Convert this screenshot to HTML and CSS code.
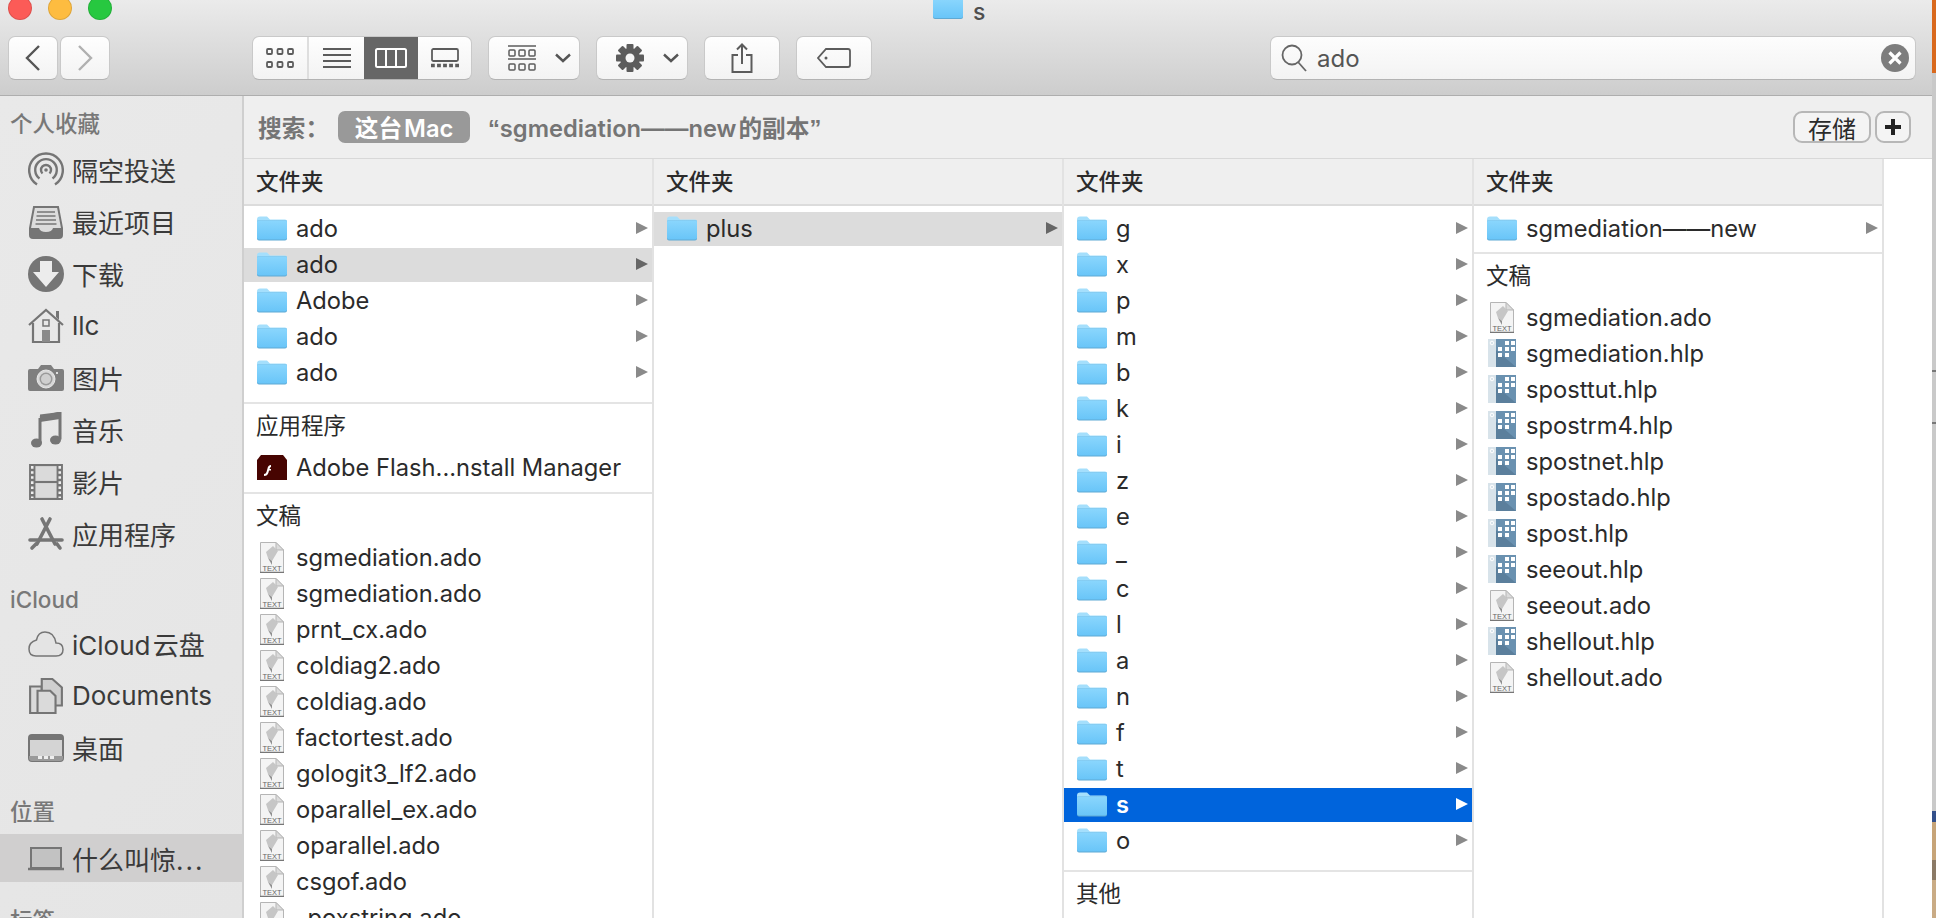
FILE: index.html
```html
<!DOCTYPE html>
<html lang="zh">
<head>
<meta charset="utf-8">
<title>s</title>
<link rel="stylesheet" href="styles.css">
</head>
<body>
<svg class="defs" aria-hidden="true">
  <defs>
    <linearGradient id="fg" x1="0" y1="0" x2="0" y2="1"><stop offset="0" stop-color="#8ad6fd"/><stop offset="1" stop-color="#69c5f8"/></linearGradient>
    <symbol id="folder" viewBox="0 0 30 24">
      <path d="M0 3Q0 0 3 0H10L13 3H28Q30 3 30 5V8H0Z" fill="#a5dffc"/>
      <path d="M0 5Q0 4 1 4H29Q30 4 30 5V22Q30 24 28 24H2Q0 24 0 22Z" fill="#5fa9d3"/>
      <path d="M0 5Q0 4 1 4H29Q30 4 30 5V21Q30 23 28 23H2Q0 23 0 21Z" fill="url(#fg)"/>
    </symbol>
    <symbol id="flash" viewBox="0 0 30 25">
      <path d="M4 0H26L30 5V25H0V5Z" fill="#470401"/>
      <path d="M14 10Q11 10 10.500 13.500L9.500 17Q9 19 7 19V21Q10.500 21 11.500 17.500L12 15.500H14V14H12.500Q13 12 14 12Z" fill="#fff"/>
    </symbol>
    <symbol id="txt" viewBox="0 0 24 31">
      <path d="M.5.5H16L23.500 8V30.500H.5Z" fill="#f4f4f4" stroke="#b5b5b5"/>
      <path d="M16 .5V8H23.500Z" fill="#dcdcdc" stroke="#b5b5b5"/>
      <path d="M6 10L13 4L18 9L12 19L8 16Z" fill="#c6c6c6"/>
      <path d="M8 16L12 23L12 19Z" fill="#8f8f8f"/>
      <path d="M0 30.500H24" stroke="#777" stroke-width="1.500"/>
      <text x="12" y="29" class="txt-label">TEXT</text>
    </symbol>
    <symbol id="hlp" viewBox="0 0 28 28">
      <rect width="8" height="28" fill="#d8e3ea"/>
      <rect x="8" width="20" height="28" fill="#6a91b0"/>
      <path d="M8 11L28 28H8Z" fill="#5b7f9c"/>
      <circle cx="4" cy="4" r="1.800" fill="none" stroke="#fff"/>
      <path d="M17 2h4v4h-4zM23 2h4v4h-4zM17 8h4v4h-4zM23 8h4v4h-4zM10 8h4v4h-4zM10 14h4v4h-4zM17 14h4v4h-4z" fill="#fff"/>
    </symbol>
    <symbol id="airdrop" viewBox="0 0 36 36">
      <g fill="none" stroke="#757575" stroke-width="2.400">
        <path d="M9 32.500A16.800 16.800 0 1 1 27 32.500"/>
        <path d="M11.500 26.500A10.800 10.800 0 1 1 24.500 26.500"/>
        <path d="M14.500 21.500A5 5 0 1 1 21.500 21.500"/>
      </g>
      <circle cx="18" cy="18" r="1.800" fill="#757575"/>
    </symbol>
    <symbol id="recent" viewBox="0 0 36 36">
      <path d="M6 3H30L34 24V31Q34 34 31 34H5Q2 34 2 31V24Z" fill="#dcdcdc" stroke="#757575" stroke-width="2"/>
      <path d="M9 8H27M8.500 12H27.500M8 16H28M7.500 20H28.500" stroke="#757575" stroke-width="1.500"/>
      <path d="M2 24H11Q12 28 18 28T25 24H34V31Q34 34 31 34H5Q2 34 2 31Z" fill="#757575"/>
    </symbol>
    <symbol id="download" viewBox="0 0 36 36">
      <circle cx="18" cy="18" r="18" fill="#757575"/>
      <path d="M12 5H24V16H31L18 31L5 16H12Z" fill="#ececec"/>
    </symbol>
    <symbol id="home" viewBox="0 0 36 36">
      <path d="M1 17L18 2L35 17" fill="none" stroke="#757575" stroke-width="2.200"/>
      <path d="M28 3H31V12L28 9Z" fill="#757575"/>
      <path d="M5 15V34H31V15" fill="none" stroke="#757575" stroke-width="2.200"/>
      <rect x="15" y="12" width="6" height="6" fill="none" stroke="#757575" stroke-width="1.500"/>
      <rect x="14" y="22" width="8" height="12" fill="#8a8a8a"/>
    </symbol>
    <symbol id="camera" viewBox="0 0 36 26">
      <path d="M2 4H10L13 0H23L26 4H34Q36 4 36 6V24Q36 26 34 26H2Q0 26 0 24V6Q0 4 2 4Z" fill="#7e7e7e"/>
      <circle cx="18" cy="14" r="9" fill="#d8d8d8" stroke="#e8e8e8" stroke-width="1"/>
      <circle cx="18" cy="14" r="6.500" fill="#9a9a9a"/>
      <circle cx="18" cy="14" r="5" fill="#cfcfcf"/>
      <circle cx="29" cy="8" r="1" fill="#fff"/>
    </symbol>
    <symbol id="music" viewBox="0 0 30 36">
      <path d="M9 6L29 1V27.500" fill="none" stroke="#757575" stroke-width="3"/>
      <path d="M9 6V31" fill="none" stroke="#757575" stroke-width="3"/>
      <path d="M9 2.500L29 0V7L9 10Z" fill="#757575"/>
      <ellipse cx="5.500" cy="31" rx="5.500" ry="4.500" fill="#757575"/>
      <ellipse cx="24.500" cy="28" rx="5.500" ry="4.500" fill="#757575"/>
    </symbol>
    <symbol id="film" viewBox="0 0 32 34">
      <rect width="32" height="34" fill="#757575"/>
      <rect x="6" y="2" width="20" height="14" fill="#dadada"/>
      <rect x="6" y="18" width="20" height="14" fill="#dadada"/>
      <path d="M3 2V32M29 2V32" stroke="#eee" stroke-width="2.400" stroke-dasharray="2.400 2.400"/>
    </symbol>
    <symbol id="apps" viewBox="0 0 36 34">
      <g fill="none" stroke="#757575" stroke-width="3.600" stroke-linecap="round">
        <path d="M14 2L27 27"/>
        <path d="M22 2L9 27"/>
        <path d="M2 23H34"/>
        <path d="M4 31L8 27"/>
        <path d="M29 27L32 31"/>
      </g>
    </symbol>
    <symbol id="cloud" viewBox="0 0 36 26">
      <path d="M8 25H28Q35 25 35 18.500T28 12Q26 1 17 1Q10 1 8.500 9Q1 11 1 18T8 25Z" fill="#e4e4e4" stroke="#757575" stroke-width="1.500"/>
    </symbol>
    <symbol id="docs" viewBox="0 0 32 34">
      <path d="M1 8H12V33H1Z" fill="#dadada" stroke="#757575" stroke-width="2"/>
      <path d="M12 1H22L31 9V26H12Z" fill="#cfcfcf" stroke="#757575" stroke-width="2"/>
      <path d="M8 12H20L25 17V33H8Z" fill="#dadada" stroke="#757575" stroke-width="2"/>
    </symbol>
    <symbol id="desktop" viewBox="0 0 36 28">
      <rect x="1" y="1" width="34" height="26" rx="3" fill="#d4d4d4" stroke="#757575" stroke-width="2"/>
      <path d="M1 4Q1 1 4 1H32Q35 1 35 4V6H1Z" fill="#757575"/>
      <path d="M1 22H35V24Q35 27 32 27H4Q1 27 1 24Z" fill="#9a9a9a"/>
      <path d="M10 22h4v3h-4zM16 22h4v3h-4zM22 22h4v3h-4z" fill="#eee"/>
    </symbol>
    <symbol id="laptop" viewBox="0 0 36 24">
      <rect x="3" y="1" width="30" height="20" fill="#c2c2c2" stroke="#757575" stroke-width="2"/>
      <path d="M0 22H36" stroke="#757575" stroke-width="2.400"/>
    </symbol>
    <symbol id="arrow" viewBox="0 0 12 12"><path d="M0 0L12 6L0 12Z" fill="currentColor"/></symbol>
  </defs>
</svg>

<div class="window">
  <header class="toolbar">
    <div class="titlebar">
      <div class="lights">
        <span class="light light-red"></span>
        <span class="light light-yellow"></span>
        <span class="light light-green"></span>
      </div>
      <div class="title">
        <svg class="title-folder"><use href="#folder"/></svg>
        <span>s</span>
      </div>
    </div>
    <div class="tools">
      <div class="nav">
        <button class="btn btn-nav"><svg width="16" height="26" viewBox="0 0 16 26"><path d="M14 1L2 13L14 25" fill="none" stroke="#555" stroke-width="2.400"/></svg></button>
        <button class="btn btn-nav"><svg width="16" height="26" viewBox="0 0 16 26"><path d="M2 1L14 13L2 25" fill="none" stroke="#b0b0b0" stroke-width="2.400"/></svg></button>
      </div>
      <div class="seg">
        <div class="seg-item seg-a"><svg width="28" height="20" viewBox="0 0 28 20"><g fill="none" stroke="#5c5c5c" stroke-width="1.800"><rect x="1" y="1" width="5" height="5" rx="1"/><rect x="11.500" y="1" width="5" height="5" rx="1"/><rect x="22" y="1" width="5" height="5" rx="1"/><rect x="1" y="14" width="5" height="5" rx="1"/><rect x="11.500" y="14" width="5" height="5" rx="1"/><rect x="22" y="14" width="5" height="5" rx="1"/></g></svg></div>
        <div class="seg-item seg-b"><svg width="28" height="20" viewBox="0 0 28 20"><path d="M0 1H28M0 7H28M0 13H28M0 19H28" stroke="#5c5c5c" stroke-width="1.800"/></svg></div>
        <div class="seg-item seg-c seg-on"><svg width="32" height="20" viewBox="0 0 32 20"><rect x="1" y="1" width="30" height="18" rx="1.500" fill="none" stroke="#fff" stroke-width="2"/><path d="M11 1V19M21 1V19" stroke="#fff" stroke-width="2"/></svg></div>
        <div class="seg-item seg-d"><svg width="28" height="20" viewBox="0 0 28 20"><rect x="1" y="1" width="26" height="12" rx="1.500" fill="none" stroke="#5c5c5c" stroke-width="1.800"/><path d="M0 17.500H28" stroke="#5c5c5c" stroke-width="3.400" stroke-dasharray="3.800 2.250"/></svg></div>
      </div>
      <button class="btn btn-menu btn-arrange">
        <svg width="28" height="26" viewBox="0 0 28 26"><path d="M0 1H28M0 14H28" stroke="#5c5c5c" stroke-width="1.500"/><g fill="none" stroke="#5c5c5c" stroke-width="1.500"><rect x="1" y="5" width="6" height="6" rx="1"/><rect x="11" y="5" width="6" height="6" rx="1"/><rect x="21" y="5" width="6" height="6" rx="1"/><rect x="1" y="19" width="6" height="6" rx="1"/><rect x="11" y="19" width="6" height="6" rx="1"/><rect x="21" y="19" width="6" height="6" rx="1"/></g></svg>
        <svg class="chev" width="16" height="10" viewBox="0 0 16 10"><path d="M1 1.500L8 8L15 1.500" fill="none" stroke="#555" stroke-width="2.400"/></svg>
      </button>
      <button class="btn btn-menu btn-action">
        <svg width="28" height="28" viewBox="0 0 28 28"><g fill="#5c5c5c"><circle cx="14" cy="14" r="10"/><rect x="10.500" y="0" width="7" height="28" rx="1"/><rect x="0" y="10.500" width="28" height="7" rx="1"/><rect x="10.500" y="0" width="7" height="28" rx="1" transform="rotate(45 14 14)"/><rect x="10.500" y="0" width="7" height="28" rx="1" transform="rotate(-45 14 14)"/></g><circle cx="14" cy="14" r="4.500" fill="#f6f6f6"/></svg>
        <svg class="chev" width="16" height="10" viewBox="0 0 16 10"><path d="M1 1.500L8 8L15 1.500" fill="none" stroke="#555" stroke-width="2.400"/></svg>
      </button>
      <button class="btn btn-share">
        <svg width="22" height="30" viewBox="0 0 22 30"><path d="M7 12H1.500V29H20.500V12H15" fill="none" stroke="#5c5c5c" stroke-width="2"/><path d="M11 2V21M6 6.500L11 1.500L16 6.500" fill="none" stroke="#5c5c5c" stroke-width="2"/></svg>
      </button>
      <button class="btn btn-tag">
        <svg width="34" height="20" viewBox="0 0 34 20"><path d="M9 1H31Q33 1 33 3V17Q33 19 31 19H9L1 10Z" fill="none" stroke="#5c5c5c" stroke-width="1.800"/><circle cx="9" cy="10" r="1.500" fill="#5c5c5c"/></svg>
      </button>
      <div class="search">
        <svg class="search-glass" width="26" height="28" viewBox="0 0 26 28"><circle cx="11" cy="11" r="9.500" fill="none" stroke="#666" stroke-width="1.800"/><path d="M17 18L25 27" stroke="#666" stroke-width="1.800"/></svg>
        <span class="search-text">ado</span>
        <svg class="search-clear" width="28" height="28" viewBox="0 0 28 28"><circle cx="14" cy="14" r="14" fill="#7d7d7d"/><path d="M8.500 8.500L19.500 19.500M19.500 8.500L8.500 19.500" stroke="#fff" stroke-width="3.200"/></svg>
      </div>
    </div>
  </header>

  <div class="main">
    <aside class="sidebar">
      <div class="side-head side-head-first">个人收藏</div>
      <div class="side-item"><svg class="si si-36"><use href="#airdrop"/></svg>隔空投送</div>
      <div class="side-item"><svg class="si si-36"><use href="#recent"/></svg>最近项目</div>
      <div class="side-item"><svg class="si si-36"><use href="#download"/></svg>下载</div>
      <div class="side-item"><svg class="si si-36"><use href="#home"/></svg>llc</div>
      <div class="side-item"><svg class="si si-camera"><use href="#camera"/></svg>图片</div>
      <div class="side-item"><svg class="si si-36"><use href="#music"/></svg>音乐</div>
      <div class="side-item"><svg class="si si-36"><use href="#film"/></svg>影片</div>
      <div class="side-item"><svg class="si si-36"><use href="#apps"/></svg>应用程序</div>
      <div class="side-head">iCloud</div>
      <div class="side-item"><svg class="si si-camera"><use href="#cloud"/></svg>iCloud&#8202;云盘</div>
      <div class="side-item"><svg class="si si-36"><use href="#docs"/></svg>Documents</div>
      <div class="side-item"><svg class="si si-camera"><use href="#desktop"/></svg>桌面</div>
      <div class="side-head side-head-loc">位置</div>
      <div class="side-item side-item-on"><svg class="si si-laptop"><use href="#laptop"/></svg><span>什么叫惊<span class="ell">...</span></span></div>
      <div class="side-head">标签</div>
    </aside>

    <section class="content">
      <div class="filter">
        <span class="filter-label">搜索：</span>
        <span class="filter-pill">这台&#8202;Mac</span>
        <span class="filter-scope"><span class="quote">“</span>sgmediation——new&#8202;的副本<span class="quote">”</span></span>
        <button class="mini mini-save">存储</button>
        <button class="mini mini-add">
          <svg width="16" height="16" viewBox="0 0 16 16"><path d="M8 0V16M0 8H16" stroke="#222" stroke-width="4"/></svg>
        </button>
      </div>
      <div class="columns">
        <div class="col">
          <div class="col-head">文件夹</div>
          <div class="list">
            <div class="row"><svg class="ic"><use href="#folder"/></svg>ado<svg class="arr"><use href="#arrow"/></svg></div>
            <div class="row row-sel"><svg class="ic"><use href="#folder"/></svg>ado<svg class="arr"><use href="#arrow"/></svg></div>
            <div class="row"><svg class="ic"><use href="#folder"/></svg>Adobe<svg class="arr"><use href="#arrow"/></svg></div>
            <div class="row"><svg class="ic"><use href="#folder"/></svg>ado<svg class="arr"><use href="#arrow"/></svg></div>
            <div class="row"><svg class="ic"><use href="#folder"/></svg>ado<svg class="arr"><use href="#arrow"/></svg></div>
          </div>
          <div class="sec-head">应用程序</div>
          <div class="list list-flash">
            <div class="row"><svg class="ic"><use href="#flash"/></svg>Adobe Flash...nstall Manager</div>
          </div>
          <div class="sec-head">文稿</div>
          <div class="list">
            <div class="row"><svg class="ic ic-txt"><use href="#txt"/></svg>sgmediation.ado</div>
            <div class="row"><svg class="ic ic-txt"><use href="#txt"/></svg>sgmediation.ado</div>
            <div class="row"><svg class="ic ic-txt"><use href="#txt"/></svg>prnt_cx.ado</div>
            <div class="row"><svg class="ic ic-txt"><use href="#txt"/></svg>coldiag2.ado</div>
            <div class="row"><svg class="ic ic-txt"><use href="#txt"/></svg>coldiag.ado</div>
            <div class="row"><svg class="ic ic-txt"><use href="#txt"/></svg>factortest.ado</div>
            <div class="row"><svg class="ic ic-txt"><use href="#txt"/></svg>gologit3_lf2.ado</div>
            <div class="row"><svg class="ic ic-txt"><use href="#txt"/></svg>oparallel_ex.ado</div>
            <div class="row"><svg class="ic ic-txt"><use href="#txt"/></svg>oparallel.ado</div>
            <div class="row"><svg class="ic ic-txt"><use href="#txt"/></svg>csgof.ado</div>
            <div class="row"><svg class="ic ic-txt"><use href="#txt"/></svg>_poxstring.ado</div>
          </div>
        </div>

        <div class="col">
          <div class="col-head">文件夹</div>
          <div class="list">
            <div class="row row-sel"><svg class="ic"><use href="#folder"/></svg>plus<svg class="arr"><use href="#arrow"/></svg></div>
          </div>
        </div>

        <div class="col">
          <div class="col-head">文件夹</div>
          <div class="list">
            <div class="row"><svg class="ic"><use href="#folder"/></svg>g<svg class="arr"><use href="#arrow"/></svg></div>
            <div class="row"><svg class="ic"><use href="#folder"/></svg>x<svg class="arr"><use href="#arrow"/></svg></div>
            <div class="row"><svg class="ic"><use href="#folder"/></svg>p<svg class="arr"><use href="#arrow"/></svg></div>
            <div class="row"><svg class="ic"><use href="#folder"/></svg>m<svg class="arr"><use href="#arrow"/></svg></div>
            <div class="row"><svg class="ic"><use href="#folder"/></svg>b<svg class="arr"><use href="#arrow"/></svg></div>
            <div class="row"><svg class="ic"><use href="#folder"/></svg>k<svg class="arr"><use href="#arrow"/></svg></div>
            <div class="row"><svg class="ic"><use href="#folder"/></svg>i<svg class="arr"><use href="#arrow"/></svg></div>
            <div class="row"><svg class="ic"><use href="#folder"/></svg>z<svg class="arr"><use href="#arrow"/></svg></div>
            <div class="row"><svg class="ic"><use href="#folder"/></svg>e<svg class="arr"><use href="#arrow"/></svg></div>
            <div class="row"><svg class="ic"><use href="#folder"/></svg>_<svg class="arr"><use href="#arrow"/></svg></div>
            <div class="row"><svg class="ic"><use href="#folder"/></svg>c<svg class="arr"><use href="#arrow"/></svg></div>
            <div class="row"><svg class="ic"><use href="#folder"/></svg>l<svg class="arr"><use href="#arrow"/></svg></div>
            <div class="row"><svg class="ic"><use href="#folder"/></svg>a<svg class="arr"><use href="#arrow"/></svg></div>
            <div class="row"><svg class="ic"><use href="#folder"/></svg>n<svg class="arr"><use href="#arrow"/></svg></div>
            <div class="row"><svg class="ic"><use href="#folder"/></svg>f<svg class="arr"><use href="#arrow"/></svg></div>
            <div class="row"><svg class="ic"><use href="#folder"/></svg>t<svg class="arr"><use href="#arrow"/></svg></div>
            <div class="row row-active"><svg class="ic"><use href="#folder"/></svg>s<svg class="arr"><use href="#arrow"/></svg></div>
            <div class="row"><svg class="ic"><use href="#folder"/></svg>o<svg class="arr"><use href="#arrow"/></svg></div>
          </div>
          <div class="sec-head">其他</div>
        </div>

        <div class="col">
          <div class="col-head">文件夹</div>
          <div class="list list-short">
            <div class="row"><svg class="ic"><use href="#folder"/></svg>sgmediation——new<svg class="arr"><use href="#arrow"/></svg></div>
          </div>
          <div class="sec-head">文稿</div>
          <div class="list">
            <div class="row"><svg class="ic ic-txt"><use href="#txt"/></svg>sgmediation.ado</div>
            <div class="row"><svg class="ic ic-hlp"><use href="#hlp"/></svg>sgmediation.hlp</div>
            <div class="row"><svg class="ic ic-hlp"><use href="#hlp"/></svg>sposttut.hlp</div>
            <div class="row"><svg class="ic ic-hlp"><use href="#hlp"/></svg>spostrm4.hlp</div>
            <div class="row"><svg class="ic ic-hlp"><use href="#hlp"/></svg>spostnet.hlp</div>
            <div class="row"><svg class="ic ic-hlp"><use href="#hlp"/></svg>spostado.hlp</div>
            <div class="row"><svg class="ic ic-hlp"><use href="#hlp"/></svg>spost.hlp</div>
            <div class="row"><svg class="ic ic-hlp"><use href="#hlp"/></svg>seeout.hlp</div>
            <div class="row"><svg class="ic ic-txt"><use href="#txt"/></svg>seeout.ado</div>
            <div class="row"><svg class="ic ic-hlp"><use href="#hlp"/></svg>shellout.hlp</div>
            <div class="row"><svg class="ic ic-txt"><use href="#txt"/></svg>shellout.ado</div>
          </div>
        </div>
      </div>
    </section>
  </div>
</div>
<div class="desktop-strip"></div>
</body>
</html>
```

FILE: styles.css
```css
* { box-sizing: border-box; }
html, body { margin: 0; height: 918px; overflow: hidden; }
body {
  display: flex;
  font-family: Inter, "Noto Sans CJK SC", sans-serif;
  color: #2b2b2b;
  background: #ccc;
}
.defs { position: absolute; width: 0; height: 0; }
.txt-label { font: 500 7.5px "Liberation Sans", sans-serif; fill: #666; text-anchor: middle; }

.window { width: 1932px; height: 918px; display: flex; flex-direction: column; overflow: hidden; background: #fff; }
.desktop-strip {
  width: 4px;
  height: 918px;
  background: linear-gradient(#d9691d 0 73px, #c9c9c9 73px 370px, #777 370px 372px, #c9c9c9 372px 422px, #777 422px 424px, #c9c9c9 424px 811px, #33508a 811px 822px, #c7a478 822px 860px, #8b7a66 860px 880px, #c9ab85 880px);
}

/* toolbar */
.toolbar {
  height: 96px;
  flex: none;
  background: linear-gradient(#ebebeb, #cdcdcd);
  border-bottom: 1px solid #aeaeae;
}
.titlebar { height: 36px; display: flex; overflow: hidden; }
.lights { display: flex; gap: 16px; margin: -4px 0 0 8px; width: 925px; }
.light { width: 24px; height: 24px; border-radius: 50%; border: 1px solid rgba(0,0,0,.12); }
.light-red { background: #fc5b57; }
.light-yellow { background: #fdbc40; }
.light-green { background: #27c840; }
.title { display: flex; gap: 10px; font-size: 23px; font-weight: 500; line-height: 24px; color: #4f4f4f; }
.title-folder { width: 30px; height: 24px; margin-top: -5px; }

.tools { display: flex; height: 44px; padding: 0 16px 0 8px; }
.btn {
  display: flex;
  align-items: center;
  justify-content: center;
  height: 44px;
  padding: 0;
  border: 1px solid #c9c9c9;
  border-bottom-color: #b3b3b3;
  border-radius: 7px;
  background: linear-gradient(#fefefe, #f3f3f3);
}
.nav { display: flex; gap: 2px; }
.btn-nav { width: 50px; }
.seg {
  display: flex;
  height: 44px;
  margin-left: 142px;
  border: 1px solid #c9c9c9;
  border-bottom-color: #b3b3b3;
  border-radius: 7px;
  overflow: hidden;
  background: linear-gradient(#fefefe, #f3f3f3);
}
.seg-item { display: flex; align-items: center; justify-content: center; }
.seg-a { width: 56px; border-right: 2px solid #dedede; }
.seg-b { width: 55px; }
.seg-c { width: 54px; }
.seg-d { width: 53px; }
.seg-on { background: #666; }
.btn-menu { width: 92px; justify-content: flex-start; }
.btn-arrange { margin-left: 16px; padding-left: 19px; }
.btn-action { margin-left: 16px; padding-left: 19px; }
.chev { margin-left: 19px; }
.btn-share { width: 76px; margin-left: 16px; }
.btn-tag { width: 76px; margin-left: 16px; }
.search {
  display: flex;
  align-items: center;
  width: 646px;
  height: 44px;
  margin-left: auto;
  padding: 0 6px 0 10px;
  border: 1px solid #c9c9c9;
  border-bottom-color: #b3b3b3;
  border-radius: 7px;
  background: linear-gradient(#fdfdfd, #f3f3f3);
}
.search-text { margin-left: 10px; font-size: 24px; color: #555; }
.search-clear { margin-left: auto; }

/* main area */
.main { flex: 1; display: flex; min-height: 0; }
.sidebar {
  width: 244px;
  flex: none;
  padding-top: 7px;
  overflow: hidden;
  background: linear-gradient(135deg, #e9e9e9, #e5e5e5);
  border-right: 2px solid #cfcfcf;
}
.side-head { height: 38px; margin-top: 20px; padding-left: 10px; font-size: 22.500px; line-height: 38px; font-weight: 500; color: #787878; }
.side-head-first { height: 42px; margin-top: 0; line-height: 42px; }
.side-head-loc { margin-top: 18px; margin-bottom: 3px; }
.side-item { display: flex; align-items: center; height: 52px; padding: 0 0 3px 28px; font-size: 26px; color: #3a3a3a; }
.side-item-on { height: 48px; padding: 1px 0 0 28px; background: #d0cfcf; }
.ell { letter-spacing: 2px; }
.si { flex: none; width: 36px; height: 36px; margin-right: 8px; }
.si-camera { height: 28px; }
.si-laptop { height: 24px; }

.content { flex: 1; min-width: 0; display: flex; flex-direction: column; }
.filter {
  display: flex;
  align-items: center;
  height: 63px;
  flex: none;
  padding: 0 21px 0 14px;
  background: #efefef;
  border-bottom: 1px solid #d8d8d8;
  font-size: 23.700px;
  font-weight: 600;
  color: #757575;
}
.filter-label { width: 80px; }
.filter-pill {
  display: flex;
  align-items: center;
  justify-content: center;
  width: 132px;
  height: 32px;
  border-radius: 7px;
  background: #999;
  color: #fff;
}
.filter-scope { margin-left: 18px; }
.quote { font-family: "Liberation Sans", sans-serif; font-weight: 700; }
.mini {
  display: flex;
  align-items: center;
  justify-content: center;
  height: 32px;
  padding: 0;
  border: 2px solid #b7b7b7;
  border-radius: 9px;
  background: #f4f4f4;
  font: 24px Inter, "Noto Sans CJK SC", sans-serif;
  color: #2b2b2b;
}
.mini-save { width: 78px; margin-left: auto; }
.mini-add { width: 36px; margin-left: 4px; }

.columns { flex: 1; min-height: 0; display: flex; overflow: hidden; }
.col { width: 410px; flex: none; border-right: 2px solid #e2e2e2; }
.col-head {
  height: 47px;
  padding-left: 12px;
  border-bottom: 2px solid #dcdcdc;
  background: #efefef;
  font-size: 22.500px;
  font-weight: 500;
  line-height: 45px;
  color: #2b2b2b;
}
.list { padding: 4px 0 12px; }
.sec-head + .list { padding-top: 0; }
.list-flash { padding-bottom: 7px; }
.list-short { padding-bottom: 6px; }
.row {
  display: flex;
  align-items: center;
  height: 34px;
  margin-top: 2px;
  padding: 0 4px 2px 13px;
  font-size: 23.700px;
  white-space: nowrap;
  color: #2b2b2b;
}
.ic { flex: none; width: 30px; height: 25px; margin-right: 9px; }
.ic-txt { height: 31px; }
.ic-hlp { height: 28px; }
.arr { flex: none; width: 12px; height: 12px; margin-left: auto; color: #8a8a8a; }
.row-sel { background: #dcdcdc; }
.row-sel .arr { color: #666; }
.row-active { background: #0064dc; color: #fff; font-weight: 600; }
.row-active .arr { color: #fff; }
.sec-head {
  height: 47px;
  padding-left: 12px;
  border-top: 2px solid #e4e4e4;
  font-size: 22.500px;
  line-height: 43px;
  color: #2b2b2b;
}
```
